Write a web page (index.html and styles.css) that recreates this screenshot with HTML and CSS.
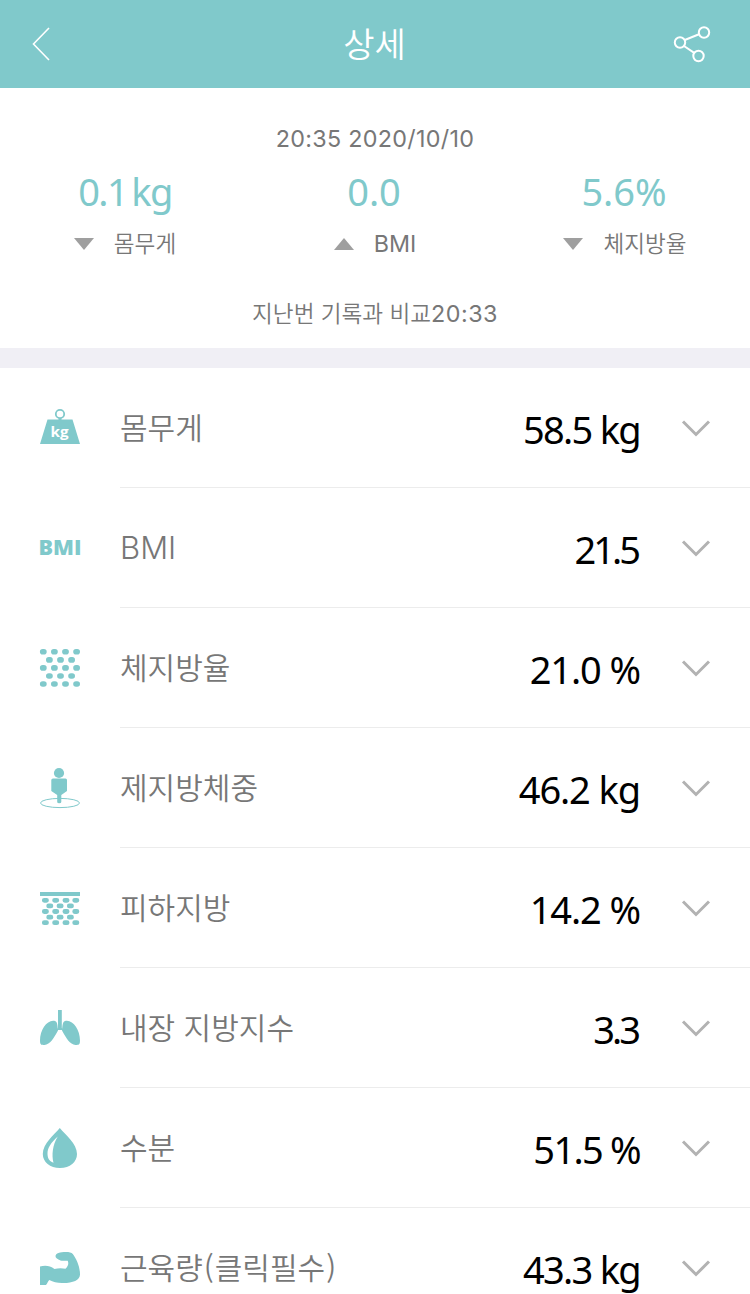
FILE: index.html
```
<!DOCTYPE html>
<html lang="ko">
<head>
    <meta charset="UTF-8">
    <title>상세</title>
    <link rel="stylesheet" href="styles.css">
</head>
<body>
    <div class="header">
        <svg class="back" width="38" height="34" viewBox="0 0 38 34"><path d="M18 1 L2.500 17 L18 33"/></svg>
        <h1>상세</h1>
        <svg class="share" width="38" height="38" viewBox="0 0 38 38">
            <circle cx="7" cy="17.500" r="5.200"/>
            <circle cx="31" cy="7.500" r="5.200"/>
            <circle cx="25.500" cy="31" r="5.200"/>
            <path d="M11.800 15 L26 9.300 M11 21 L21.200 27.800"/>
        </svg>
    </div>

    <div class="summary">
        <p class="date">20:35 2020/10/10</p>
        <ul class="compare">
            <li>
                <b class="s1">0.1 kg</b>
                <div class="change"><i class="down"></i><span>몸무게</span></div>
            </li>
            <li>
                <b>0.0</b>
                <div class="change"><i class="up"></i><span class="en">BMI</span></div>
            </li>
            <li>
                <b>5.6%</b>
                <div class="change"><i class="down"></i><span>체지방율</span></div>
            </li>
        </ul>
        <p class="last">지난번 기록과 비교<span class="en">20:33</span></p>
    </div>

    <ul class="list">
        <li>
            <svg class="icon" viewBox="0 0 40 40">
                <circle class="line" cx="20" cy="6" r="4.200"/>
                <path d="M18.500 10 h3 v1.500 H32.500 L40 36 H0 L7.500 11.500 H18.500z"/>
                <text class="kg" x="10.500" y="29" textLength="18" lengthAdjust="spacingAndGlyphs">kg</text>
            </svg>
            <div class="item"><span class="name">몸무게</span><span class="num kilo">58.5 kg</span><svg class="arrow" viewBox="0 0 30 18"><path d="M2 2.500 L15 15.500 L28 2.500"/></svg></div>
        </li>
        <li>
            <svg class="icon" viewBox="0 0 40 40">
                <text class="bmi" x="-1.500" y="27" textLength="43" lengthAdjust="spacingAndGlyphs">BMI</text>
            </svg>
            <div class="item"><span class="name en">BMI</span><span class="num tight">21.5</span><svg class="arrow" viewBox="0 0 30 18"><path d="M2 2.500 L15 15.500 L28 2.500"/></svg></div>
        </li>
        <li>
            <svg class="icon" viewBox="0 0 40 40">
                <path class="dots" d="M2.700 3.700h1.200M13.800 3.700h1.200M24.900 3.700h1.200M36 3.700h1.200M8.800 11.900h1.200M19.900 11.900h1.200M31 11.900h1.200M2.700 19.900h1.200M13.800 19.900h1.200M24.900 19.900h1.200M36 19.900h1.200M8.800 28h1.200M19.900 28h1.200M31 28h1.200M2.700 36h1.200M13.800 36h1.200M24.900 36h1.200M36 36h1.200"/>
            </svg>
            <div class="item"><span class="name">체지방율</span><span class="num">21.0 %</span><svg class="arrow" viewBox="0 0 30 18"><path d="M2 2.500 L15 15.500 L28 2.500"/></svg></div>
        </li>
        <li>
            <svg class="icon" viewBox="0 0 40 40">
                <ellipse class="thin" cx="20" cy="35" rx="19.500" ry="4.600"/>
                <circle cx="19" cy="5" r="5.100"/>
                <path d="M13 10.500 H25.500 Q27 10.500 27 12 V23 L21.300 27 V34 Q21.300 35.200 19.200 35.200 Q17.200 35.200 17.200 34 V27 L11.300 23 V12 Q11.300 10.500 13 10.500z"/>
            </svg>
            <div class="item"><span class="name">제지방체중</span><span class="num">46.2 kg</span><svg class="arrow" viewBox="0 0 30 18"><path d="M2 2.500 L15 15.500 L28 2.500"/></svg></div>
        </li>
        <li>
            <svg class="icon" viewBox="0 0 40 40">
                <path d="M0 4h40v4H0z"/>
                <path class="dots small" d="M4.300 12.300h2.200M14.600 12.300h2.200M24.900 12.300h2.200M34.700 12.300h2.200M8.700 17.900h2.200M19 17.900h2.200M29.300 17.900h2.200M4.300 23.500h2.200M14.600 23.500h2.200M24.900 23.500h2.200M34.700 23.500h2.200M8.700 29.200h2.200M19 29.200h2.200M29.300 29.200h2.200M4.300 34.700h2.200M14.600 34.700h2.200M24.900 34.700h2.200M34.700 34.700h2.200"/>
            </svg>
            <div class="item"><span class="name">피하지방</span><span class="num">14.2 %</span><svg class="arrow" viewBox="0 0 30 18"><path d="M2 2.500 L15 15.500 L28 2.500"/></svg></div>
        </li>
        <li>
            <svg class="icon" viewBox="0 0 40 40">
                <path d="M18 2h3.800v18l2.200 2H16l2-2z"/>
                <path d="M15.500 13.200 C8 10.500 0 21 0 32.500 C0 36.500 1 37 4.500 37 C10 36.500 14 30 18 22.500 C17.500 18 17.500 14.500 15.500 13.200z"/>
                <path d="M24.500 13.200 C32 10.500 40 21 40 32.500 C40 36.500 39 37 35.500 37 C30 36.500 26 30 22 22.500 C22.500 18 22.500 14.500 24.500 13.200z"/>
            </svg>
            <div class="item"><span class="name">내장 지방지수</span><span class="num tight">3.3</span><svg class="arrow" viewBox="0 0 30 18"><path d="M2 2.500 L15 15.500 L28 2.500"/></svg></div>
        </li>
        <li>
            <svg class="icon" viewBox="0 0 40 40">
                <path d="M19.800 0 C25.500 7 37 15.500 37 26 C37 34 30 40 20 40 C10 40 2.800 34 2.800 26 C2.800 15.500 14 7 19.800 0z"/>
                <path class="shine" d="M17.800 8.500 C11 14.500 7.500 20 7.500 25.500 C7.500 30 9 33 13.500 34.800 C11.500 27 12.500 17 17.800 8.500z"/>
            </svg>
            <div class="item"><span class="name">수분</span><span class="num kilo">51.5 %</span><svg class="arrow" viewBox="0 0 30 18"><path d="M2 2.500 L15 15.500 L28 2.500"/></svg></div>
        </li>
        <li>
            <svg class="icon" viewBox="0 0 40 40">
                <path d="M0 18.500 C5 17 10 17.500 14.500 21 C18 20 22 20 25.500 20.700 C28 18.500 29 15.500 27.700 12.800 C25 12.500 22.500 13 20.500 12.500 C17.500 11.500 15.500 10 15.500 8.300 C15.500 5 20 4 26 4 C29 4 31.500 4.500 32.800 6 C36.500 11 40 18.500 40 26.500 C40 32.500 32 35.300 22 35 C17 35 13 34 9.300 32 C8 33 7.500 35.500 6 37 H0z"/>
            </svg>
            <div class="item"><span class="name">근육량<span class="paren">(</span>클릭필수<span class="paren">)</span></span><span class="num kilo">43.3 kg</span><svg class="arrow" viewBox="0 0 30 18"><path d="M2 2.500 L15 15.500 L28 2.500"/></svg></div>
        </li>
    </ul>
</body>
</html>
```
FILE: styles.css
```
* {
    margin: 0;
    padding: 0;
    box-sizing: border-box;
}
body {
    height: 1294px;
    overflow: hidden;
    background: #fff;
    color: #777;
    font-family: "Noto Sans CJK KR", sans-serif;
}
ul {
    list-style: none;
}
.header {
    display: flex;
    align-items: center;
    justify-content: space-between;
    height: 88px;
    padding: 0 39px 0 31px;
    background: #80c9cb;
    color: #fff;
}
.header svg {
    fill: none;
    stroke: #fff;
    stroke-width: 2;
}
.header .back {
    stroke-width: 1.6;
}
.header h1 {
    margin-left: 7px;
    font-size: 34px;
    font-weight: 350;
    line-height: 86px;
    height: 88px;
}
.summary {
    height: 280px;
    padding-top: 32px;
    border-bottom: 20px solid #f0eff5;
    text-align: center;
    font-size: 22.6px;
    font-weight: 350;
}
.en, .date {
    font-family: Inter, sans-serif;
    font-size: 23.3px;
    font-weight: 400;
}
.date {
    height: 38px;
    line-height: 38px;
    letter-spacing: .3px;
}
.compare {
    display: flex;
}
.compare li {
    flex: 1;
}
.compare b {
    display: block;
    height: 68px;
    margin-left: -2px;
    line-height: 67px;
    color: #80c9cb;
    font-family: "Noto Sans", sans-serif;
    font-size: 38px;
    font-weight: 370;
}
.compare .s1 {
    margin-left: 0;
    letter-spacing: -1.6px;
    word-spacing: -4px;
}
.change {
    display: flex;
    align-items: center;
    justify-content: center;
    height: 36px;
    line-height: 33px;
}
.change span {
    height: 36px;
}
.change .en {
    line-height: 36px;
}
.change i {
    margin-right: 20px;
    border: 10px solid transparent;
}
.change .down {
    border-top: 12px solid #9f9f9f;
    border-bottom: 0;
}
.change .up {
    border-bottom: 12px solid #9f9f9f;
    border-top: 0;
}
.last {
    margin-top: 34px;
    height: 36px;
    line-height: 34px;
}
.last .en {
    letter-spacing: .5px;
}
.list li {
    display: flex;
    align-items: center;
    height: 120px;
    padding-left: 40px;
}
.icon {
    width: 40px;
    height: 40px;
    margin-right: 40px;
    fill: #80c9cb;
    overflow: visible;
}
.icon .line, .icon .thin {
    fill: none;
    stroke: #80c9cb;
    stroke-width: 1.8;
}
.icon .thin {
    stroke-width: 1;
}
.icon .dots {
    stroke: #80c9cb;
    stroke-width: 5.6;
    stroke-linecap: round;
}
.icon .small {
    stroke-width: 4.8;
}
.icon .shine, .icon .kg {
    fill: #fff;
}
.icon text {
    font-family: "Open Sans", sans-serif;
    font-weight: 700;
    font-size: 13.5px;
}
.icon .bmi {
    font-weight: 800;
    font-size: 20.5px;
}
.item {
    flex: 1;
    display: flex;
    align-items: center;
    height: 120px;
    padding-right: 39px;
    border-bottom: 1px solid #ececec;
}
.name {
    flex: 1;
    padding-bottom: 4px;
    font-size: 30px;
    font-weight: 350;
}
.name.en {
    padding: 0;
    font-size: 31px;
}
.paren {
    padding: 0 1px;
}
.num {
    padding-top: 2px;
    color: #000;
    font-family: "Noto Sans", sans-serif;
    font-size: 38px;
    font-weight: 380;
    line-height: 60px;
    letter-spacing: -1.1px;
}
.num.kilo {
    letter-spacing: -1.7px;
}
.num.tight {
    margin-right: 2px;
    letter-spacing: -3px;
}
.arrow {
    flex: none;
    width: 30px;
    height: 18px;
    margin-left: 41px;
    fill: none;
    stroke: #b2b2b2;
    stroke-width: 3;
}
```
